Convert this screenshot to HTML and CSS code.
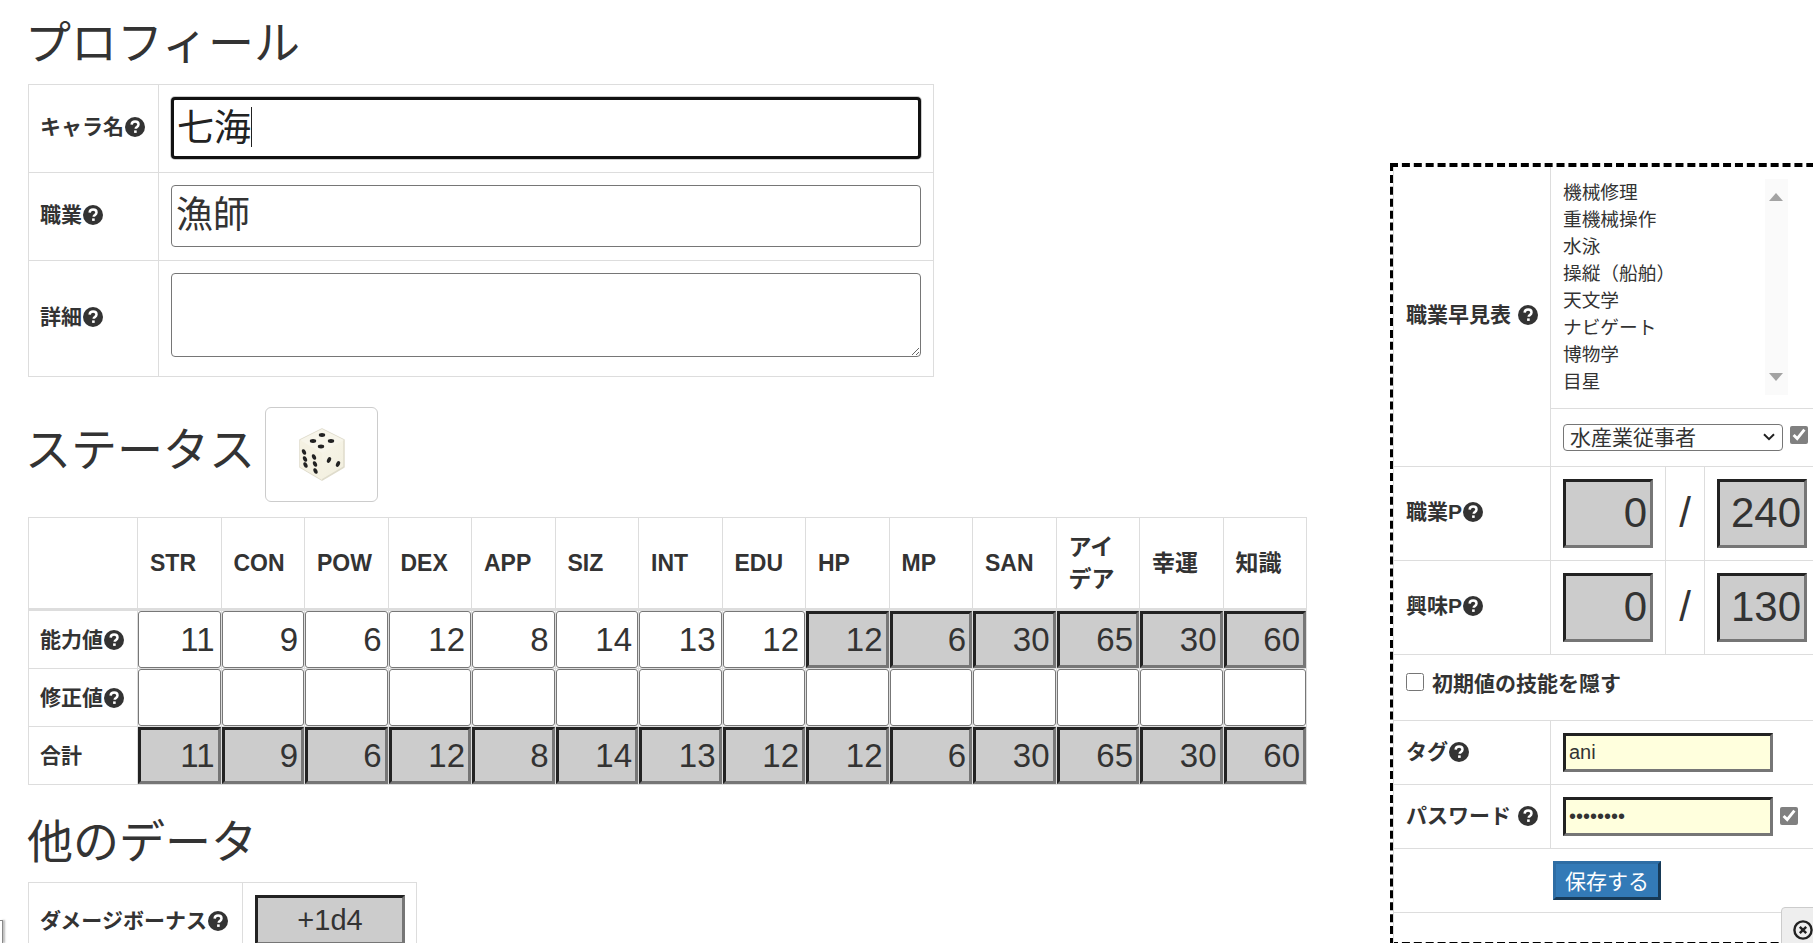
FILE: index.html
```html
<!DOCTYPE html>
<html lang="ja">
<head>
    <meta charset="UTF-8">
    <title>キャラクターシート</title>
    <link rel="stylesheet" href="styles.css">
</head>
<body>
    <svg class="defs" width="0" height="0">
        <symbol id="help" viewBox="0 0 20 20">
            <circle cx="10" cy="10" r="10" fill="#333"/>
            <path d="M6.6 7.6C6.8 5.6 8.3 4.6 10.1 4.6c2 0 3.4 1.2 3.4 2.9 0 1.4-.8 2-1.7 2.6-.8.5-1.1.9-1.1 1.7" fill="none" stroke="#fff" stroke-width="2.5"/>
            <rect x="9.1" y="13.4" width="2.6" height="2.5" fill="#fff"/>
        </symbol>
    </svg>

    <div class="sheet">
        <h2 class="title-first">プロフィール</h2>
        <table class="grid profile">
            <colgroup><col class="profile-head"><col></colgroup>
            <tr class="row-name">
                <th>キャラ名<svg class="help"><use href="#help"/></svg></th>
                <td class="name-cell">
                    <input class="text-big is-focused" type="text" value="七海" readonly>
                    <span class="caret"></span>
                </td>
            </tr>
            <tr class="row-job">
                <th>職業<svg class="help"><use href="#help"/></svg></th>
                <td><input class="text-big" type="text" value="漁師" readonly></td>
            </tr>
            <tr class="row-detail">
                <th>詳細<svg class="help"><use href="#help"/></svg></th>
                <td><textarea class="text-area" readonly></textarea></td>
            </tr>
        </table>

        <div class="status-head">
            <h2>ステータス</h2>
            <button class="dice-btn" type="button" aria-label="ダイス">
                <svg width="46" height="53" viewBox="0 0 46 53">
                    <defs>
                        <linearGradient id="diceRight" x1="0" y1="0" x2="1" y2="1">
                            <stop offset="0" stop-color="#fbf9ef"/>
                            <stop offset="1" stop-color="#f1eedd"/>
                        </linearGradient>
                    </defs>
                    <path d="M23 1 45 12 45 39 23 52 1 39 1 12Z" fill="url(#diceRight)" stroke="#dfdccc" stroke-width="1.5" stroke-linejoin="round"/>
                    <path d="M23 1 45 12 23 25 1 12Z" fill="#f7f5ea"/>
                    <path d="M1 12 23 25 23 52 1 39Z" fill="#f4f1e2"/>
                    <g fill="#222">
                        <ellipse cx="23" cy="7" rx="3.2" ry="1.9"/>
                        <ellipse cx="14" cy="13" rx="3.2" ry="1.9"/>
                        <ellipse cx="32" cy="13" rx="3.2" ry="1.9"/>
                        <ellipse cx="22" cy="18.5" rx="3.2" ry="1.9"/>
                        <ellipse cx="5" cy="24" rx="1.9" ry="2.9" transform="rotate(-25 5 24)"/>
                        <ellipse cx="6" cy="31" rx="1.9" ry="2.9" transform="rotate(-25 6 31)"/>
                        <ellipse cx="6.5" cy="37" rx="1.9" ry="2.9" transform="rotate(-25 6.5 37)"/>
                        <ellipse cx="15" cy="29" rx="1.9" ry="2.9" transform="rotate(-25 15 29)"/>
                        <ellipse cx="16" cy="36" rx="1.9" ry="2.9" transform="rotate(-25 16 36)"/>
                        <ellipse cx="16.5" cy="43" rx="1.9" ry="2.9" transform="rotate(-25 16.5 43)"/>
                        <ellipse cx="30" cy="32" rx="1.9" ry="3" transform="rotate(25 30 32)"/>
                        <ellipse cx="39" cy="36" rx="1.9" ry="3" transform="rotate(25 39 36)"/>
                    </g>
                </svg>
            </button>
        </div>

        <table class="grid stats">
            <colgroup>
                <col class="stats-head">
                <col span="14">
            </colgroup>
            <thead>
                <tr>
                    <th></th>
                    <th>STR</th><th>CON</th><th>POW</th><th>DEX</th><th>APP</th><th>SIZ</th><th>INT</th>
                    <th>EDU</th><th>HP</th><th>MP</th><th>SAN</th><th>アイデア</th><th>幸運</th><th>知識</th>
                </tr>
            </thead>
            <tbody>
                <tr>
                    <th>能力値<svg class="help"><use href="#help"/></svg></th>
                    <td><input class="stat" value="11"></td>
                    <td><input class="stat" value="9"></td>
                    <td><input class="stat" value="6"></td>
                    <td><input class="stat" value="12"></td>
                    <td><input class="stat" value="8"></td>
                    <td><input class="stat" value="14"></td>
                    <td><input class="stat" value="13"></td>
                    <td><input class="stat" value="12"></td>
                    <td><input class="stat readout" value="12" readonly></td>
                    <td><input class="stat readout" value="6" readonly></td>
                    <td><input class="stat readout" value="30" readonly></td>
                    <td><input class="stat readout" value="65" readonly></td>
                    <td><input class="stat readout" value="30" readonly></td>
                    <td><input class="stat readout" value="60" readonly></td>
                </tr>
                <tr>
                    <th>修正値<svg class="help"><use href="#help"/></svg></th>
                    <td><input class="stat"></td>
                    <td><input class="stat"></td>
                    <td><input class="stat"></td>
                    <td><input class="stat"></td>
                    <td><input class="stat"></td>
                    <td><input class="stat"></td>
                    <td><input class="stat"></td>
                    <td><input class="stat"></td>
                    <td><input class="stat"></td>
                    <td><input class="stat"></td>
                    <td><input class="stat"></td>
                    <td><input class="stat"></td>
                    <td><input class="stat"></td>
                    <td><input class="stat"></td>
                </tr>
                <tr>
                    <th>合計</th>
                    <td><input class="stat readout" value="11" readonly></td>
                    <td><input class="stat readout" value="9" readonly></td>
                    <td><input class="stat readout" value="6" readonly></td>
                    <td><input class="stat readout" value="12" readonly></td>
                    <td><input class="stat readout" value="8" readonly></td>
                    <td><input class="stat readout" value="14" readonly></td>
                    <td><input class="stat readout" value="13" readonly></td>
                    <td><input class="stat readout" value="12" readonly></td>
                    <td><input class="stat readout" value="12" readonly></td>
                    <td><input class="stat readout" value="6" readonly></td>
                    <td><input class="stat readout" value="30" readonly></td>
                    <td><input class="stat readout" value="65" readonly></td>
                    <td><input class="stat readout" value="30" readonly></td>
                    <td><input class="stat readout" value="60" readonly></td>
                </tr>
            </tbody>
        </table>

        <h2 class="title-other">他のデータ</h2>
        <table class="grid other">
            <colgroup><col class="other-head"><col></colgroup>
            <tr>
                <th>ダメージボーナス<svg class="help"><use href="#help"/></svg></th>
                <td><input class="readout bonus" value="+1d4" readonly></td>
            </tr>
        </table>
    </div>

    <!-- 右の固定パネル -->
    <aside class="side-panel">
        <table class="grid panel-table">
            <colgroup>
                <col class="panel-head">
                <col class="panel-a">
                <col class="panel-b">
                <col class="panel-c">
            </colgroup>
            <tr class="row-list">
                <th rowspan="2">職業早見表 <svg class="help"><use href="#help"/></svg></th>
                <td colspan="3">
                    <div class="skill-box">
                        <ul class="skill-list">
                            <li>機械修理</li>
                            <li>重機械操作</li>
                            <li>水泳</li>
                            <li>操縦（船舶）</li>
                            <li>天文学</li>
                            <li>ナビゲート</li>
                            <li>博物学</li>
                            <li>目星</li>
                        </ul>
                        <div class="scroll-track">
                            <span class="arrow-up"></span>
                            <span class="arrow-down"></span>
                        </div>
                    </div>
                </td>
            </tr>
            <tr class="row-select">
                <td colspan="3">
                    <div class="with-check">
                        <select class="job-select"><option>水産業従事者</option></select>
                        <input class="check" type="checkbox" checked>
                    </div>
                </td>
            </tr>
            <tr class="row-points">
                <th>職業P<svg class="help"><use href="#help"/></svg></th>
                <td><input class="readout point" value="0" readonly></td>
                <td class="slash">/</td>
                <td><input class="readout point" value="240" readonly></td>
            </tr>
            <tr class="row-points">
                <th>興味P<svg class="help"><use href="#help"/></svg></th>
                <td><input class="readout point" value="0" readonly></td>
                <td class="slash">/</td>
                <td><input class="readout point" value="130" readonly></td>
            </tr>
            <tr class="row-hide">
                <th colspan="4"><label class="hide-label"><input class="check" type="checkbox"> 初期値の技能を隠す</label></th>
            </tr>
            <tr class="row-field">
                <th>タグ<svg class="help"><use href="#help"/></svg></th>
                <td colspan="3"><input class="yellow" type="text" value="ani" readonly></td>
            </tr>
            <tr class="row-field">
                <th>パスワード <svg class="help"><use href="#help"/></svg></th>
                <td colspan="3">
                    <div class="with-check">
                        <input class="yellow" type="password" value="password" readonly>
                        <input class="check" type="checkbox" checked>
                    </div>
                </td>
            </tr>
            <tr class="row-save">
                <td colspan="4"><button class="save-btn" type="button">保存する</button></td>
            </tr>
            <tr class="row-last">
                <td colspan="4"></td>
            </tr>
        </table>
    </aside>

    <button class="close-tab" type="button" aria-label="閉じる">
        <svg width="20" height="20" viewBox="0 0 20 20">
            <circle cx="10" cy="10" r="8.6" fill="none" stroke="#222" stroke-width="2.4"/>
            <path d="M6.8 6.8 13.2 13.2M13.2 6.8 6.8 13.2" stroke="#222" stroke-width="2.4"/>
        </svg>
    </button>
    <div class="edge-tab"></div>
</body>
</html>
```

FILE: styles.css
```css
* {
    box-sizing: border-box;
}

html {
    overflow: hidden;
}

body {
    margin: 0;
    color: #333;
    background: #fff;
    font-family: "Liberation Sans", "Noto Sans CJK JP", sans-serif;
    font-size: 21px;
}

.defs {
    position: absolute;
}

.sheet {
    padding-left: 28px;
}

h2 {
    margin: 0 0 0 -3px;
    font-size: 46px;
    font-weight: 400;
    line-height: 50px;
}

.title-first {
    margin-top: 18px;
    margin-bottom: 16px;
}

.title-other {
    margin-top: 32px;
    margin-bottom: 15px;
    margin-left: -1px;
}

/* tables */
.grid {
    border-collapse: collapse;
    table-layout: fixed;
}

.grid th,
.grid td {
    border: 1px solid #ddd;
    padding: 0;
}

.grid th {
    text-align: left;
    padding-left: 11px;
    padding-bottom: 3px;
    font-size: 21px;
    font-weight: 700;
    white-space: nowrap;
}

.help {
    width: 20px;
    height: 20px;
    margin-left: 1px;
    vertical-align: -3px;
}

input,
select,
textarea {
    font-family: "Liberation Sans", "Noto Sans CJK JP", sans-serif;
    color: #333;
    margin: 0;
}

/* profile */
.profile {
    width: 906px;
}

.profile-head {
    width: 130px;
}

.profile th {
    padding-bottom: 8px;
}

.row-name,
.row-job {
    height: 88px;
}

.row-detail {
    height: 116px;
}

.profile td {
    padding: 12px 12px 0 12px;
    vertical-align: top;
}

.name-cell {
    position: relative;
}

.text-big {
    display: block;
    width: 100%;
    height: 62px;
    padding: 0 4px 9px;
    font-size: 37px;
    border: 1px solid #767676;
    border-radius: 4px;
    outline: none;
}

.text-big.is-focused {
    border: 3px solid #111;
    padding: 0 3px 7px;
    box-shadow: 0 0 0 1px #ccc;
    color: #222;
}

.caret {
    position: absolute;
    left: 92px;
    top: 22px;
    width: 1px;
    height: 40px;
    background: #222;
}

.text-area {
    display: block;
    width: 100%;
    height: 84px;
    padding: 4px;
    font-size: 21px;
    border: 1px solid #767676;
    border-radius: 4px;
}

/* status */
.status-head {
    display: flex;
    align-items: center;
    gap: 10px;
    margin-top: 30px;
    margin-bottom: 15px;
}

.status-head h2 {
    margin-bottom: 10px;
}

.dice-btn {
    display: flex;
    align-items: center;
    justify-content: center;
    width: 113px;
    height: 95px;
    padding: 0;
    background: #fff;
    border: 1px solid #ccc;
    border-radius: 6px;
}

.stats {
    width: 1279px;
}

.stats-head {
    width: 109px;
}

.stats thead th {
    height: 92px;
    padding-bottom: 0;
    padding-left: 12px;
    padding-right: 12px;
    border-bottom: 3px solid #ddd;
    font-size: 23px;
    line-height: 32px;
    white-space: normal;
}

.stat {
    display: block;
    width: 100%;
    height: 57px;
    padding: 0 5px 0 0;
    font-size: 33px;
    text-align: right;
    background: #fff;
    border: 1px solid #777;
    border-radius: 3px;
}

.readout {
    background: #ccc;
    border-style: solid;
    border-width: 3px;
    border-color: #222 #767676 #767676 #222;
    border-radius: 0;
}

.stat.readout {
    padding-right: 3px;
}

/* other */
.other {
    width: 389px;
}

.other-head {
    width: 214px;
}

.other td {
    padding: 12px;
}

.bonus {
    display: block;
    width: 150px;
    height: 50px;
    padding: 0;
    font-size: 29px;
    text-align: center;
}

/* side panel */
.side-panel {
    position: fixed;
    left: 1390px;
    top: 163px;
    width: 460px;
    height: 783px;
    background: #fff;
    border: 4px dashed #000;
}

.panel-table {
    width: 427px;
    margin-left: -1px;
}

.panel-table th {
    padding-left: 12px;
    padding-bottom: 7px;
}

.panel-table tr:first-child th,
.panel-table tr:first-child td {
    border-top: 0;
}

.panel-head {
    width: 157px;
}

.panel-a {
    width: 115px;
}

.panel-b {
    width: 39px;
}

.panel-c {
    width: 116px;
}

.panel-table td {
    padding: 0 12px;
}

.row-list {
    height: 241px;
}

.skill-box {
    display: flex;
    height: 216px;
}

.skill-list {
    flex: 1;
    margin: 0;
    padding: 0;
    list-style: none;
    font-size: 18.7px;
    line-height: 27px;
}

.scroll-track {
    position: relative;
    width: 23px;
    margin-right: 20px;
    background: #fafafa;
}

.arrow-up,
.arrow-down {
    position: absolute;
    left: 4px;
    width: 0;
    height: 0;
    border-left: 7.5px solid transparent;
    border-right: 7.5px solid transparent;
}

.arrow-up {
    top: 14px;
    border-bottom: 8px solid #a3a3a3;
}

.arrow-down {
    bottom: 14px;
    border-top: 8px solid #a3a3a3;
}

.row-select {
    height: 58px;
}

.with-check {
    display: flex;
    align-items: center;
    gap: 7px;
}

.job-select {
    width: 220px;
    height: 27px;
    padding: 0 24px 0 6px;
    font-size: 21px;
    appearance: none;
    background: #fff url("data:image/svg+xml,%3Csvg xmlns='http://www.w3.org/2000/svg' width='12' height='8'%3E%3Cpath d='M1 1.2 6 6.2 11 1.2' fill='none' stroke='%23222' stroke-width='2'/%3E%3C/svg%3E") no-repeat right 7px center;
    border: 1px solid #767676;
    border-radius: 4px;
}

.check {
    width: 18px;
    height: 18px;
    margin: 0;
    flex: none;
    accent-color: #808080;
}

.row-select .check {
    margin-top: -4px;
}

.row-points {
    height: 94px;
}

.point {
    display: block;
    width: 90px;
    height: 69px;
    padding: 0 3px 0 0;
    font-size: 42px;
    text-align: right;
}

.panel-table .slash {
    padding: 0;
    font-size: 42px;
    text-align: center;
}

.row-hide {
    height: 66px;
}

.panel-table .row-hide th {
    padding-bottom: 10px;
}

.hide-label {
    display: flex;
    align-items: center;
    gap: 8px;
}

.row-field {
    height: 64px;
}

.panel-table .row-field th {
    padding-bottom: 5px;
}

.yellow {
    display: block;
    width: 210px;
    height: 39px;
    padding: 0 3px;
    font-size: 20px;
    background: #ffd;
    border-style: solid;
    border-width: 3px;
    border-color: #222 #767676 #767676 #222;
}

.row-save {
    height: 64px;
}

.row-save td {
    text-align: center;
}

.save-btn {
    width: 108px;
    height: 39px;
    padding: 0;
    font-family: "Liberation Sans", "Noto Sans CJK JP", sans-serif;
    font-size: 21px;
    color: #fff;
    background: #337ab7;
    border-style: solid;
    border-width: 3px;
    border-color: #2e6da4 #173a57 #173a57 #2e6da4;
}

.row-last {
    height: 31px;
}

.close-tab {
    position: fixed;
    left: 1781px;
    top: 907px;
    width: 40px;
    height: 40px;
    padding: 6px 0 0 11px;
    display: block;
    text-align: left;
    background: #eee;
    border: 1px solid #ccc;
    border-radius: 4px 0 0 0;
}

.close-tab svg {
    display: block;
}

.edge-tab {
    position: fixed;
    left: 0;
    top: 920px;
    width: 3px;
    height: 23px;
    border-top: 1px solid #888;
    border-right: 1px solid #888;
    box-shadow: 2px 0 2px #bbb;
}
```
